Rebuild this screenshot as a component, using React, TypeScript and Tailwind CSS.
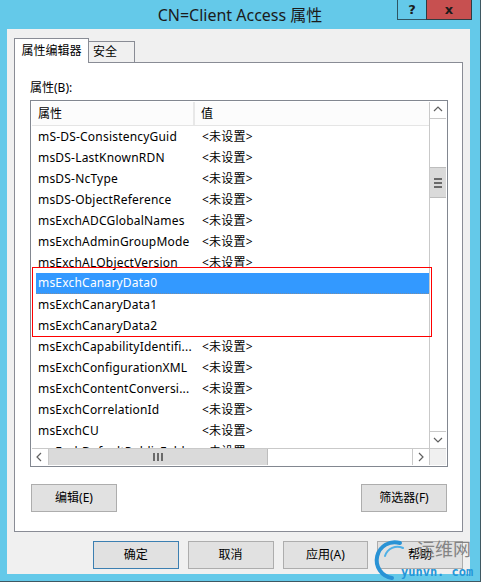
import React from "react";

const rows: { name: string; value?: string; selected?: boolean }[] = [
  { name: "mS-DS-ConsistencyGuid", value: "<未设置>" },
  { name: "msDS-LastKnownRDN", value: "<未设置>" },
  { name: "msDS-NcType", value: "<未设置>" },
  { name: "msDS-ObjectReference", value: "<未设置>" },
  { name: "msExchADCGlobalNames", value: "<未设置>" },
  { name: "msExchAdminGroupMode", value: "<未设置>" },
  { name: "msExchALObjectVersion", value: "<未设置>" },
  { name: "msExchCanaryData0", selected: true },
  { name: "msExchCanaryData1" },
  { name: "msExchCanaryData2" },
  { name: "msExchCapabilityIdentifi...", value: "<未设置>" },
  { name: "msExchConfigurationXML", value: "<未设置>" },
  { name: "msExchContentConversi...", value: "<未设置>" },
  { name: "msExchCorrelationId", value: "<未设置>" },
  { name: "msExchCU", value: "<未设置>" },
  { name: "msExchDefaultPublicFold...", value: "<未设置>" },
];

function Chevron({ dir }: { dir: "up" | "down" | "left" | "right" }) {
  const pts = {
    up: "2,7 6,3 10,7",
    down: "2,4 6,8 10,4",
    left: "7,2 3,6 7,10",
    right: "4,2 8,6 4,10",
  }[dir];
  return (
    <svg width="12" height="12" viewBox="0 0 12 12">
      <polyline points={pts} fill="none" stroke="#606060" strokeWidth="1.2" />
    </svg>
  );
}

function Btn({ label, primary }: { label: string; primary?: boolean }) {
  return (
    <div
      className={`w-[86px] h-[28px] flex items-center justify-center bg-[#e1e1e1] border ${
        primary ? "border-[#3c7fb1]" : "border-[#adadad]"
      }`}
    >
      {label}
    </div>
  );
}

export default function App() {
  return (
    <div className="relative w-[482px] h-[587px] bg-white overflow-hidden text-[12px] text-black font-['Noto_Sans','Noto_Sans_CJK_SC',sans-serif]">
      <div className="w-[481px] h-[582px] bg-[#64c9e9] border-r border-b border-[#3f5862] flex flex-col">
        {/* title bar */}
        <div className="relative h-[29px] shrink-0 flex items-center justify-center text-[16px] text-[#1b1b1b]">
          CN=Client Access 属性
          <div className="absolute right-[8px] top-0 flex h-[20px]">
            <div className="w-[29px] h-full flex items-center justify-center border-l border-b border-[#2e5563] font-bold text-[13px] font-['DejaVu_Sans',sans-serif]">
              ?
            </div>
            <div className="w-[46px] h-full flex items-center justify-center bg-[#c75050] border-l border-r border-b border-[#2e3c42] font-bold text-[13px] font-['DejaVu_Sans',sans-serif]">
              x
            </div>
          </div>
        </div>

        {/* client area */}
        <div className="ml-[7px] w-[463px] h-[545px] bg-[#f0f0f0] px-[7px] pt-[9px] flex flex-col">
          {/* tabs */}
          <div className="flex items-end h-[24px]">
            <div className="relative z-10 w-[75px] h-[25px] -mb-px bg-white border border-b-0 border-[#898c95] flex items-center justify-center pb-[1px]">
              属性编辑器
            </div>
            <div className="w-[46px] h-[21px] bg-[#f0f0f0] border border-l-0 border-b-0 border-[#898c95] flex items-center pl-[4px]">
              安全
            </div>
          </div>

          {/* panel */}
          <div className="w-[449px] h-[470px] bg-white border border-[#898c95] pl-[15px] pt-[17px]">
            <div className="h-[16px] leading-[16px]">属性(B):</div>

            <div className="relative mt-[4px] w-[418px] h-[367px] border border-[#828790] p-[1px] flex flex-col">
              <div className="flex h-[346px]">
                {/* rows area */}
                <div className="flex-1 overflow-hidden">
                  <div className="flex h-[24px] bg-[#fcfcfc] border-b border-[#e5e5e5]">
                    <div className="w-[163px] border-r-2 border-[#e8e8e8] flex items-center pl-[6px]">属性</div>
                    <div className="flex items-center pl-[6px]">值</div>
                  </div>
                  {rows.map((r) => (
                    <div key={r.name} className="h-[21px] flex pl-[4px] tracking-[0.2px]">
                      <div
                        className={`flex-1 flex items-center pl-[2px] ${
                          r.selected ? "bg-[#3399ff] text-white border-b border-dotted border-[#7a8da3]" : ""
                        }`}
                      >
                        <span className="w-[164px] shrink-0 whitespace-nowrap overflow-hidden">{r.name}</span>
                        <span className="whitespace-nowrap">{r.value}</span>
                      </div>
                    </div>
                  ))}
                </div>
                {/* vertical scrollbar */}
                <div className="w-[17px] flex flex-col border-l border-[#c9c9c9]">
                  <div className="h-[17px] flex items-center justify-center border-b border-[#c9c9c9]">
                    <Chevron dir="up" />
                  </div>
                  <div className="mt-[48px] h-[31px] bg-[#dadada] border-y border-[#bdbdbd] flex flex-col items-center justify-center gap-[2px]">
                    <div className="w-[8px] h-[2px] bg-[#6a6a6a]" />
                    <div className="w-[8px] h-[2px] bg-[#6a6a6a]" />
                    <div className="w-[8px] h-[2px] bg-[#6a6a6a]" />
                  </div>
                  <div className="flex-1" />
                  <div className="h-[17px] flex items-center justify-center border-t border-[#c9c9c9]">
                    <Chevron dir="down" />
                  </div>
                </div>
              </div>
              {/* horizontal scrollbar */}
              <div className="flex h-[17px] border-t border-[#c9c9c9]">
                <div className="w-[17px] flex items-center justify-center border-r border-[#c9c9c9]">
                  <Chevron dir="left" />
                </div>
                <div className="w-[219px] bg-[#dadada] border-r border-[#bdbdbd] flex items-center justify-center gap-[2px]">
                  <div className="w-[2px] h-[8px] bg-[#6a6a6a]" />
                  <div className="w-[2px] h-[8px] bg-[#6a6a6a]" />
                  <div className="w-[2px] h-[8px] bg-[#6a6a6a]" />
                </div>
                <div className="flex-1" />
                <div className="w-[17px] flex items-center justify-center border-l border-[#c9c9c9]">
                  <Chevron dir="right" />
                </div>
                <div className="w-[17px] bg-[#f0f0f0] border-l border-[#c9c9c9]" />
              </div>

              {/* annotation box */}
              <div className="absolute left-[1px] top-[166px] w-[400px] h-[70px] border border-[#ff0000]" />
            </div>

            <div className="mt-[17px] ml-[1px] w-[416px] flex justify-between">
              <Btn label="编辑(E)" />
              <Btn label="筛选器(F)" />
            </div>
          </div>

          {/* dialog buttons */}
          <div className="mt-[9px] ml-[79px] flex gap-[9px]">
            <Btn label="确定" primary />
            <Btn label="取消" />
            <Btn label="应用(A)" />
            <Btn label="帮助" />
          </div>
        </div>
      </div>

      {/* watermark */}
      <svg className="absolute left-[372px] top-[537px]" width="42" height="46" viewBox="0 0 42 46">
        <path d="M28 6 A18 18 0 1 0 20 41" fill="none" stroke="#2a93d5" strokeWidth="4" strokeLinecap="round" />
        <path d="M31 11 A13 13 0 0 0 13 19" fill="none" stroke="#4fb0e6" strokeWidth="2" strokeLinecap="round" />
      </svg>
      <div className="absolute left-[417px] top-[537px] text-[18px] leading-[24px] text-[#7a7a7a] opacity-90">运维网</div>
      <div className="absolute left-[401px] top-[565px] text-[12px] leading-[15px] font-bold text-[#2596d9] font-['DejaVu_Sans_Mono',monospace]">
        yunvn. com
      </div>
    </div>
  );
}
